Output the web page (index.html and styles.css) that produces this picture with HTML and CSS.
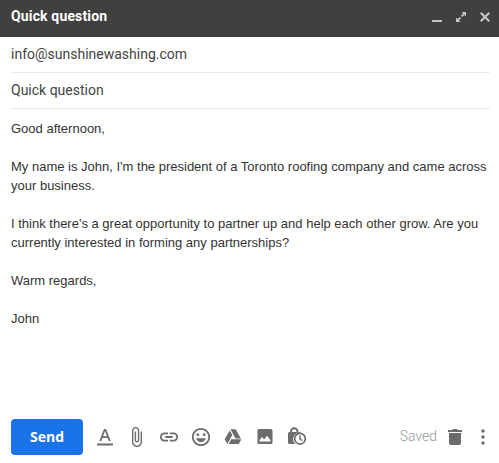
FILE: index.html
```
<!DOCTYPE html>
<html lang="en">
<head>
    <meta charset="UTF-8">
    <meta name="viewport" content="width=device-width, initial-scale=1.0">
    <title>Quick question</title>
    <link rel="stylesheet" href="styles.css">
</head>
<body>
<div class="compose">
    <div class="header">
        <h2>Quick question</h2>
        <div class="window-btns">
            <svg viewBox="0 0 12 12"><path d="M1 9h10v2H1z"/></svg>
            <svg viewBox="0 0 12 12"><path d="M6.500 1H11v4.500L9.400 3.900 7.200 6.100 5.900 4.800 8.100 2.600zM1 6.500l1.600 1.600 2.200-2.200 1.300 1.300-2.200 2.200L5.500 11H1z"/></svg>
            <svg viewBox="0 0 12 12"><path d="M2.500 1L6 4.500 9.500 1 11 2.500 7.500 6 11 9.500 9.500 11 6 7.500 2.500 11 1 9.500 4.500 6 1 2.500z"/></svg>
        </div>
    </div>

    <div class="field">info@sunshinewashing.com</div>
    <div class="field">Quick question</div>

    <div class="message">
        <p>Good afternoon,</p>
        <p>My name is John, I'm the president of a Toronto roofing company and came across<br>your business.</p>
        <p>I think there's a great opportunity to partner up and help each other grow. Are you<br>currently interested in forming any partnerships?</p>
        <p>Warm regards,</p>
        <p>John</p>
    </div>

    <div class="toolbar">
        <button type="button" class="send-btn">Send</button>
        <div class="tools">
            <!-- Formatting -->
            <svg viewBox="0 0 20 20"><path d="M2 16.500h16v2H2zM9 2h2l4.700 12h-2l-1.100-3H7.400l-1.100 3h-2zM8.100 9.200h3.800L10 4.100z"/></svg>
            <!-- Attach -->
            <svg viewBox="1.500 1 22 22"><path d="M16.500 6v11.500c0 2.210-1.790 4-4 4s-4-1.790-4-4V5c0-1.380 1.120-2.500 2.500-2.500s2.500 1.120 2.500 2.500v10.500c0 .550-.450 1-1 1s-1-.450-1-1V6H10v9.500c0 1.380 1.120 2.500 2.500 2.500s2.500-1.120 2.500-2.500V5c0-2.210-1.790-4-4-4S7 2.790 7 5v12.500c0 3.040 2.460 5.500 5.500 5.500s5.500-2.460 5.500-5.500V6h-1.500z"/></svg>
            <!-- Link -->
            <svg viewBox="1 1 22 22"><path d="M3.900 12c0-1.710 1.390-3.100 3.100-3.100h4V7H7c-2.760 0-5 2.240-5 5s2.240 5 5 5h4v-1.900H7c-1.710 0-3.100-1.390-3.100-3.100zM8 13h8v-2H8v2zm9-6h-4v1.900h4c1.710 0 3.100 1.390 3.100 3.100s-1.390 3.100-3.100 3.100h-4V17h4c2.760 0 5-2.240 5-5s-2.240-5-5-5z"/></svg>
            <!-- Emoji -->
            <svg viewBox="1 1 22 22"><path d="M11.990 2C6.470 2 2 6.480 2 12s4.470 10 9.990 10C17.520 22 22 17.520 22 12S17.520 2 11.990 2zM12 20c-4.420 0-8-3.580-8-8s3.580-8 8-8 8 3.580 8 8-3.580 8-8 8zm3.500-9c.830 0 1.500-.670 1.500-1.500S16.330 8 15.500 8 14 8.670 14 9.500s.670 1.500 1.500 1.500zm-7 0c.830 0 1.500-.670 1.500-1.500S9.330 8 8.500 8 7 8.670 7 9.500 7.670 11 8.500 11zM6.500 13.500c.8 2.500 2.900 4.300 5.500 4.300s4.700-1.800 5.500-4.300z"/></svg>
            <!-- Drive -->
            <svg viewBox="-1 -1 26 26"><path d="M7.710 3.500L1.150 15l3.430 6 6.550-11.500M9.730 15L6.300 21h13.120l3.430-6m-.570-1L15.420 2H8.580l6.850 12"/></svg>
            <!-- Photo -->
            <svg viewBox="0 0.500 24 24"><path d="M21 19V5c0-1.100-.9-2-2-2H5c-1.100 0-2 .9-2 2v14c0 1.100.9 2 2 2h14c1.100 0 2-.9 2-2zM5.500 18v-2l3-3.500 2.500 3 3.500-4.500 4 5v2z"/></svg>
            <!-- Confidential mode -->
            <svg viewBox="0 0 20 20"><path fill-rule="evenodd" d="M3 5V4.500a4.200 4.200 0 0 1 8.400 0V5h1q1.200 0 1.500.8A6.500 6.500 0 0 0 8.300 17H2.500Q1 17 1 15.500v-9Q1 5 2.500 5zM4.900 5h4.600v-.5a2.300 2.300 0 0 0-4.600 0z"/><path fill-rule="evenodd" d="M13 5.500a6.200 6.200 0 1 0 0 12.400 6.200 6.200 0 0 0 0-12.400zm0 1.700a4.500 4.500 0 1 1 0 9 4.500 4.500 0 0 1 0-9zm-.8 1.300v3.700l2.700 2.100.8-1.100-2-1.600V8.500z"/></svg>
        </div>
        <span class="saved">Saved</span>
        <svg class="trash" viewBox="0 0 16 18"><path d="M1 2h4l1.200-1h3.600L11 2h4v2H1zM2 5h12v10q0 2-2 2H4q-2 0-2-2z"/></svg>
        <svg class="more" viewBox="0 0 4 16"><circle cx="2" cy="2" r="1.700"/><circle cx="2" cy="8" r="1.700"/><circle cx="2" cy="14" r="1.700"/></svg>
    </div>
</div>
</body>
</html>
```
FILE: styles.css
```
body {
    margin: 0;
    background-color: #fff;
    font-family: Roboto, Arial, sans-serif;
}

.compose {
    display: flex;
    flex-direction: column;
    height: 463px;
    overflow: hidden;
}

/* Header */
.header {
    display: flex;
    align-items: center;
    justify-content: space-between;
    height: 37px;
    padding: 0 8px 0 11px;
    box-sizing: border-box;
    background-color: #404040;
}

.header h2 {
    margin: 0 0 5px;
    color: #fff;
    font-size: 14px;
    line-height: 20px;
    letter-spacing: 0.15px;
}

.window-btns {
    display: flex;
    gap: 12px;
    margin-bottom: 3px;
}

.window-btns svg {
    width: 12px;
    height: 12px;
    fill: #c4c4c4;
}

/* Recipient and subject */
.field {
    height: 35px;
    margin: 0 9px 0 11px;
    border-bottom: 1px solid #ececec;
    color: #444;
    font-size: 14px;
    line-height: 35px;
}

/* Message body */
.message {
    flex: 1;
    padding: 10px 0 0 11px;
    color: #333;
    font-family: "Liberation Sans", Arial, sans-serif;
    font-size: 13px;
    line-height: 19px;
    white-space: nowrap;
}

.message p {
    margin: 0 0 19px;
}

/* Bottom toolbar */
.toolbar {
    display: flex;
    align-items: center;
    height: 36px;
    margin: 0 14px 8px 11px;
}

.send-btn {
    width: 72px;
    height: 36px;
    padding: 0 0 2px;
    border: none;
    border-radius: 4px;
    background-color: #1a73e8;
    color: #fff;
    font-family: "Open Sans", sans-serif;
    font-size: 14px;
    font-weight: bold;
}

.tools {
    display: flex;
    gap: 12px;
    margin-left: 12px;
}

.toolbar svg {
    fill: #6c6c6c;
}

.tools svg {
    width: 20px;
    height: 20px;
}

.saved {
    margin: 0 0 2px auto;
    color: #999;
    font-size: 14px;
    font-weight: 300;
}

.trash {
    width: 16px;
    height: 18px;
    margin: 0 18px 0 10px;
}

.more {
    width: 4px;
    height: 16px;
}
```
